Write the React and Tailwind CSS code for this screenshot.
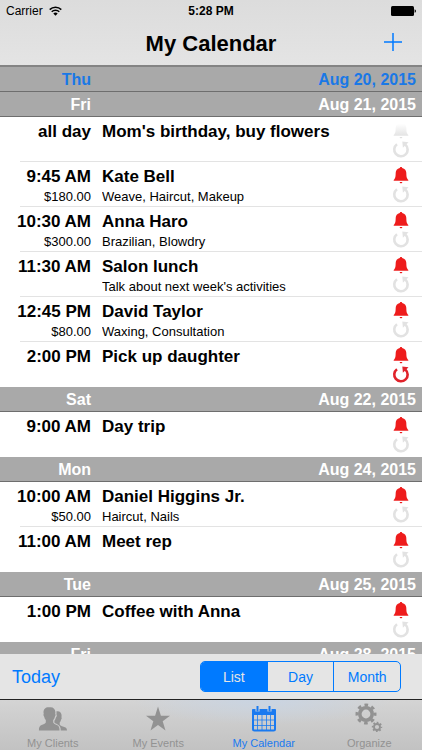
import { useState } from "react";
import clsx from "clsx";

const days = [
  { day: "Thu", date: "Aug 20, 2015", today: true, events: [] },
  {
    day: "Fri",
    date: "Aug 21, 2015",
    events: [
      { time: "all day", title: "Mom's birthday, buy flowers" },
      { time: "9:45 AM", title: "Kate Bell", price: "$180.00", note: "Weave, Haircut, Makeup", alarm: true },
      { time: "10:30 AM", title: "Anna Haro", price: "$300.00", note: "Brazilian, Blowdry", alarm: true },
      { time: "11:30 AM", title: "Salon lunch", note: "Talk about next week's activities", alarm: true },
      { time: "12:45 PM", title: "David Taylor", price: "$80.00", note: "Waxing, Consultation", alarm: true },
      { time: "2:00 PM", title: "Pick up daughter", alarm: true, repeat: true },
    ],
  },
  { day: "Sat", date: "Aug 22, 2015", events: [{ time: "9:00 AM", title: "Day trip", alarm: true }] },
  {
    day: "Mon",
    date: "Aug 24, 2015",
    events: [
      { time: "10:00 AM", title: "Daniel Higgins Jr.", price: "$50.00", note: "Haircut, Nails", alarm: true },
      { time: "11:00 AM", title: "Meet rep", alarm: true },
    ],
  },
  { day: "Tue", date: "Aug 25, 2015", events: [{ time: "1:00 PM", title: "Coffee with Anna", alarm: true }] },
  { day: "Fri", date: "Aug 28, 2015", events: [] },
];

const tabs = [
  { label: "My Clients", Icon: ClientsIcon },
  { label: "My Events", Icon: StarIcon },
  { label: "My Calendar", Icon: CalendarIcon },
  { label: "Organize", Icon: GearsIcon },
];

function WifiIcon() {
  return (
    <svg viewBox="0 0 13 10" className="w-[13px] h-[10px]" fill="none" stroke="#000" strokeWidth="1.5">
      <path d="M.7 3.6a8.2 8.2 0 0 1 11.6 0" />
      <path d="M2.7 5.8a5.4 5.4 0 0 1 7.6 0" />
      <path d="M6.5 9.8 4.3 7.5a3.1 3.1 0 0 1 4.4 0z" fill="#000" stroke="none" />
    </svg>
  );
}

function BatteryIcon() {
  return (
    <svg viewBox="0 0 25 10" className="w-[25px] h-[10px]">
      <rect width="23" height="10" rx="1.5" />
      <path d="M23.6 3.2q1.4.4 1.4 1.800t-1.400 1.800z" />
    </svg>
  );
}

function BellIcon({ on }) {
  return (
    <svg viewBox="0 0 16 18" className="w-4 h-[18px]">
      <defs>
        <linearGradient id="bell-off" x1="0" y1="0" x2="0" y2="1">
          <stop offset="0.1" stopColor="#fff" />
          <stop offset="1" stopColor="#dedede" />
        </linearGradient>
      </defs>
      <path
        fill={on ? "#ee1c1c" : "url(#bell-off)"}
        d="M8 1c.8 0 1.2.5 1.200 1.100 2.800.7 4 2.500 4.100 4.700.1 2.400.1 4.100.8 5.500.3.700.7 1.200 1.200 1.600v.9H.7v-.9c.5-.4.9-.9 1.200-1.600.7-1.400.7-3.100.8-5.500.1-2.200 1.300-4 4.100-4.700C6.800 1.500 7.200 1 8 1zM6.600 15.900h2.800c-.2.900-.7 1.300-1.400 1.300s-1.200-.4-1.400-1.300z"
      />
    </svg>
  );
}

function RepeatIcon({ on }) {
  return (
    <svg viewBox="0 0 18 18" className="w-[18px] h-[18px]">
      <path
        d="M5 4.200A6.700 6.700 0 1 0 13.400 4.600"
        fill="none"
        stroke={on ? "#e0222a" : "#e2e2e2"}
        strokeWidth="2.6"
      />
      <path d="M10.300 1.600 16.500 2.200 10.900 7.800z" fill={on ? "#e0222a" : "#e2e2e2"} />
    </svg>
  );
}

function ClientsIcon() {
  return (
    <svg viewBox="0 0 30 26" className="w-[30px] h-[26px]" fill="currentColor">
      <path d="M12.500 1.300c3 0 4.900 2 4.900 5 0 .8-.1 1.300-.2 1.800.7.3.5 1.700-.3 2.600-.3 1.500-.9 2.600-1.700 3.400v2.300c.5 1.300 1.900 1.800 3.600 2.600 2.200 1 2.700 2.200 2.700 5.600H.9c0-3.400.5-4.600 2.700-5.600 1.700-.8 3.700-1.300 4.200-2.600v-2.300c-.8-.8-1.300-1.900-1.600-3.400-.8-.9-1.100-2.300-.4-2.600-.2-.5-.3-1-.3-1.800 0-3 2-5 5-5z" />
      <path d="M18.400 5.300c3.100-.7 5.300 1.300 5.200 4.500 0 .5-.1 1-.2 1.400.6.3.4 1.600-.3 2.300-.2 1.200-.7 2.200-1.400 2.900v2c.5 1.200 1.900 1.600 3.300 2.100 3 1.100 4 1.500 4 4.100h-6.200c-.1-3.400-.9-5-3.200-6.100-1.500-.8-2.700-1.200-3.200-1.900v-1.800c.6-.7 1.100-1.700 1.500-3.200 1-1.200 1.100-2.500.5-3.100.2-1.100.2-2.200 0-3.200z" />
    </svg>
  );
}

function StarIcon() {
  return (
    <svg viewBox="0 0 26 26" className="w-[26px] h-[26px]" fill="currentColor">
      <path d="M13 .6 15.900 9.800H25L17.700 15.200 20.500 24.600 13 18.900 5.500 24.600 8.300 15.200 1 9.800H10.100z" />
    </svg>
  );
}

function CalendarIcon() {
  return (
    <svg viewBox="0 0 26 26" className="w-[26px] h-[26px]" fill="none" stroke="currentColor">
      <path d="M1.500 3.500h23v5h-23z" fill="currentColor" />
      <path d="M6.500 0v5.500M18.500 0v5.500" stroke="#cfd5dc" strokeWidth="4" />
      <path d="M6.500 0v5.500M18.500 0v5.500" strokeWidth="2" />
      <path d="M2 4v19q0 1.500 1.500 1.500h19q1.500 0 1.500-1.500V4" strokeWidth="2" />
      <path d="M6.500 9v16M11 9v16M15.500 9v16M19.500 9v16M2 14h22M2 19.500h22" strokeOpacity="0.8" />
    </svg>
  );
}

function GearsIcon() {
  return (
    <svg viewBox="0 0 28 30" className="w-7 h-[30px]" fill="none" stroke="currentColor">
      <circle cx="11" cy="12" r="6.200" strokeWidth="3.600" />
      <circle cx="11" cy="12" r="9" strokeWidth="3" strokeDasharray="3.600 3.469" strokeDashoffset="1.800" />
      <circle cx="22" cy="25" r="3" strokeWidth="1.800" />
      <circle cx="22" cy="25" r="4.400" strokeWidth="1.600" strokeDasharray="1.700 1.756" strokeDashoffset="0.850" />
    </svg>
  );
}

function EventRow({ event, last }) {
  return (
    <li className="relative flex h-[45px]">
      <div className="w-[91px] shrink-0 text-right">
        <p className="pt-[3px] text-[17px] leading-6 font-bold">{event.time}</p>
        <p className="text-[13px] leading-4">{event.price}</p>
      </div>
      <div className="min-w-0 flex-1 pl-[11px]">
        <p className="truncate pt-[3px] text-[17px] leading-6 font-bold">{event.title}</p>
        <p className="truncate text-[13px] leading-4">{event.note}</p>
      </div>
      <div className="flex w-[42px] shrink-0 flex-col items-center gap-px pt-1">
        <BellIcon on={event.alarm} />
        <RepeatIcon on={event.repeat} />
      </div>
      {!last && <div className="absolute right-0 bottom-0 left-5 h-px bg-[#e3e3e3]" />}
    </li>
  );
}

function DaySection({ section }) {
  return (
    <section>
      <h2
        className={clsx(
          "flex h-[25px] items-end justify-between border-b border-[#6e6e6e] bg-[#a9a9a9] pr-[6px] text-base leading-[22px] font-bold",
          section.today ? "text-[#1a78e6]" : "text-white"
        )}
      >
        <span className="w-[91px] text-right">{section.day}</span>
        <span>{section.date}</span>
      </h2>
      <ul>
        {section.events.map((event, i) => (
          <EventRow key={event.time} event={event} last={i === section.events.length - 1} />
        ))}
      </ul>
    </section>
  );
}

export default function App() {
  const [view, setView] = useState("List");
  const [activeTab, setActiveTab] = useState("My Calendar");

  return (
    <div className="flex h-screen flex-col bg-white font-['Liberation_Sans',Arial,sans-serif] text-black">
      <header className="shrink-0 bg-linear-to-b from-[#dcdcdc] to-[#e4e4e4]">
        <div className="grid h-[22px] grid-cols-3 items-center px-[6px] text-xs">
          <div className="flex items-center gap-[6px]">
            <span>Carrier</span>
            <WifiIcon />
          </div>
          <span className="text-center font-bold">5:28 PM</span>
          <div className="flex justify-end">
            <BatteryIcon />
          </div>
        </div>
        <div className="grid h-[43px] grid-cols-[1fr_auto_1fr] items-center px-5">
          <h1 className="col-start-2 text-[22px] leading-10 font-bold">My Calendar</h1>
          <button type="button" aria-label="Add event" className="justify-self-end pb-1 text-[#007aff]">
            <svg viewBox="0 0 18 18" className="h-[18px] w-[18px]" stroke="currentColor" strokeWidth="1.500">
              <path d="M9 0v18M0 9h18" />
            </svg>
          </button>
        </div>
      </header>

      {/* Event list */}
      <main className="min-h-0 flex-1 overflow-hidden border-t-2 border-[#848484]">
        {days.map((section) => (
          <DaySection key={section.date} section={section} />
        ))}
      </main>

      {/* View switcher */}
      <div className="flex h-[45px] shrink-0 items-center justify-between bg-[#e5e5e5] pr-[21px] pl-3 text-[#007aff]">
        <button type="button" className="text-lg">
          Today
        </button>
        <div className="flex h-[31px] w-[201px] overflow-hidden rounded-[5px] border border-[#007aff]">
          {["List", "Day", "Month"].map((name) => (
            <button
              key={name}
              type="button"
              aria-pressed={view === name}
              onClick={() => setView(name)}
              className={clsx(
                "flex-1 border-r border-[#007aff] text-sm last:border-r-0",
                view === name && "bg-[#007aff] text-[#e5e5e5]"
              )}
            >
              {name}
            </button>
          ))}
        </div>
      </div>

      {/* Tab bar */}
      <nav className="grid h-[51px] shrink-0 grid-cols-4 border-t border-[#222] bg-[radial-gradient(ellipse_at_62%_0%,#c9d4e2,transparent_35%),linear-gradient(#d4d4d4,#c2c2c2)]">
        {tabs.map(({ label, Icon }) => (
          <button
            key={label}
            type="button"
            onClick={() => setActiveTab(label)}
            className={clsx(
              "flex flex-col items-center justify-end text-[11px] leading-[14px]",
              activeTab === label ? "text-[#1a7af0]" : "text-[#929292]"
            )}
          >
            <Icon />
            <span className="pt-1">{label}</span>
          </button>
        ))}
      </nav>
    </div>
  );
}
